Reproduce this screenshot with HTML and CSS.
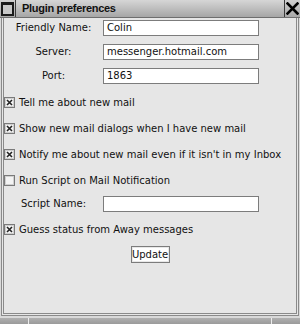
FILE: index.html
```html
<!DOCTYPE html>
<html>
<head>
<meta charset="utf-8">
<link rel="stylesheet" href="styles.css">
</head>
<body>
<div class="window">
  <div class="titlebar">
    <div class="menu-btn"><span class="menu-icon"></span></div>
    <div class="title">Plugin preferences</div>
    <div class="close-btn">
      <svg width="13" height="13" viewBox="0 0 13 13"><path d="M1.5 1.5 L11.5 11.5 M11.5 1.5 L1.5 11.5" stroke="#000" stroke-width="2.6" stroke-linecap="square"/></svg>
    </div>
  </div>
  <div class="content">
    <div class="field first">
      <label class="flabel">Friendly Name:</label>
      <div class="input">Colin</div>
    </div>
    <div class="field">
      <label class="flabel">Server:</label>
      <div class="input">messenger.hotmail.com</div>
    </div>
    <div class="field">
      <label class="flabel">Port:</label>
      <div class="input">1863</div>
    </div>
    <div class="check gap10">
      <span class="box checked"><svg width="7" height="7" viewBox="0 0 7 7"><path d="M1 1 L6 6 M6 1 L1 6" stroke="#222" stroke-width="1.6"/></svg></span>
      <span>Tell me about new mail</span>
    </div>
    <div class="check gap10">
      <span class="box checked"><svg width="7" height="7" viewBox="0 0 7 7"><path d="M1 1 L6 6 M6 1 L1 6" stroke="#222" stroke-width="1.6"/></svg></span>
      <span>Show new mail dialogs when I have new mail</span>
    </div>
    <div class="check gap10">
      <span class="box checked"><svg width="7" height="7" viewBox="0 0 7 7"><path d="M1 1 L6 6 M6 1 L1 6" stroke="#222" stroke-width="1.6"/></svg></span>
      <span>Notify me about new mail even if it isn't in my Inbox</span>
    </div>
    <div class="check gap10">
      <span class="box"></span>
      <span>Run Script on Mail Notification</span>
    </div>
    <div class="field">
      <label class="flabel">Script Name:</label>
      <div class="input"></div>
    </div>
    <div class="check gap9">
      <span class="box checked"><svg width="7" height="7" viewBox="0 0 7 7"><path d="M1 1 L6 6 M6 1 L1 6" stroke="#222" stroke-width="1.6"/></svg></span>
      <span>Guess status from Away messages</span>
    </div>
    <div class="actions">
      <button class="btn">Update</button>
    </div>
  </div>
  <div class="statusbar">
    <div class="seg s1"></div>
    <div class="seg s2"></div>
    <div class="seg s3"></div>
  </div>
</div>
</body>
</html>
```
FILE: styles.css
```css
html, body {
  margin: 0;
  padding: 0;
}
body {
  width: 300px;
  height: 324px;
  overflow: hidden;
  background: #d9d9d9;
  font-family: "DejaVu Sans", sans-serif;
  font-size: 10px;
  color: #111;
}
.window {
  width: 300px;
  height: 324px;
  display: flex;
  flex-direction: column;
}
.titlebar {
  height: 17px;
  flex: none;
  display: flex;
  align-items: stretch;
  background: linear-gradient(#d6d6d6, #a6a6a6);
  border-bottom: 1px solid #6e6e6e;
}
.menu-btn {
  width: 15px;
  border-right: 1px solid #3a3a3a;
  display: flex;
  align-items: center;
  justify-content: center;
  background: linear-gradient(#cfcfcf, #a8a8a8);
}
.menu-icon {
  width: 9px;
  height: 9px;
  border: 2px solid #1a1a1a;
  border-top-width: 3px;
  background: #c8c8c8;
}
.title {
  flex: 1;
  padding-left: 6px;
  font-family: "Liberation Sans", Arial, sans-serif;
  font-weight: bold;
  font-size: 11px;
  letter-spacing: -0.3px;
  line-height: 17px;
  color: #111;
}
.close-btn {
  width: 15px;
  border-left: 1px solid #3a3a3a;
  display: flex;
  align-items: center;
  justify-content: center;
  background: linear-gradient(#cfcfcf, #a8a8a8);
}
.content {
  flex: 1;
  margin: 0 1px 2px 1px;
  border: 3px double #8a8a8a;
  border-top: none;
  border-left-width: 3px;
  background: #e6e6e6;
  padding-top: 1px;
  display: flex;
  flex-direction: column;
}
.field {
  display: flex;
  align-items: center;
  height: 16px;
  margin-top: 8px;
}
.field.first {
  margin-top: 1px;
}
.flabel {
  width: 99px;
  text-align: center;
  line-height: 16px;
}
.input {
  width: 154px;
  height: 14px;
  border: 1px solid #7c7c7c;
  background: #fff;
  padding-left: 3px;
  box-sizing: content-box;
  line-height: 14px;
  width: 151px;
}
.check {
  display: flex;
  align-items: center;
  height: 16px;
  gap: 4px;
}
.gap10 { margin-top: 10px; }
.gap9 { margin-top: 9px; }
.box {
  width: 9px;
  height: 9px;
  border: 1px solid #7a7a7a;
  background: #f4f4f4;
  box-shadow: inset 0 0 0 1px #d0d0d0;
  display: flex;
  align-items: center;
  justify-content: center;
  flex: none;
}
.box svg {
  display: block;
}
.actions {
  display: flex;
  justify-content: center;
  margin-top: 9px;
}
.btn {
  font-family: "DejaVu Sans", sans-serif;
  font-size: 10px;
  color: #111;
  background: #fff;
  border: 1px solid #7c7c7c;
  box-shadow: inset 0 0 0 1px #e8e8e8;
  height: 17px;
  width: 39px;
  padding: 0;
  margin: 0;
  line-height: 15px;
}
.statusbar {
  height: 6px;
  flex: none;
  display: flex;
  background: #a4a4a4;
}
.seg {
  background: linear-gradient(#b0b0b0, #9a9a9a);
}
.s1 { width: 28px; border-right: 1px solid #ececec; }
.s2 { flex: 1; border-right: 1px solid #ececec; }
.s3 { width: 28px; }
```
